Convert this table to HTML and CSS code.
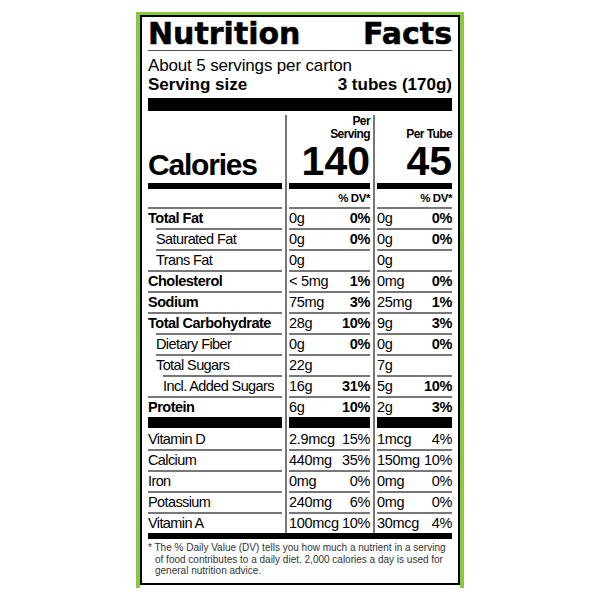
FILE: index.html
```html
<!DOCTYPE html>
<html lang="en">
<head>
<meta charset="utf-8">
<title>Nutrition Facts</title>
<link rel="stylesheet" href="styles.css">
</head>
<body>
<div class="label">
  <div class="panel">
    <h1 class="title"><span>Nutrition</span><span>Facts</span></h1>
    <p class="servings">About 5 servings per carton</p>
    <p class="size"><span>Serving size</span><span>3 tubes (170g)</span></p>
    <div class="bar-lg"></div>
    <div class="table">
      <div class="sep s1"></div>
      <div class="sep s2"></div>

      <div class="c1 head"><span class="cal">Calories</span></div>
      <div class="c2 head"><span class="per">Per<br>Serving</span><span class="big">140</span></div>
      <div class="c3 head"><span class="per">Per Tube</span><span class="big">45</span></div>

      <div class="c1 blk"></div><div class="c2 blk"></div><div class="c3 blk"></div>

      <div class="c1"></div><div class="c2 dv">% DV*</div><div class="c3 dv">% DV*</div>

      <div class="c1 r b">Total Fat</div><div class="c2 r v"><span>0g</span><b>0%</b></div><div class="c3 r v"><span>0g</span><b>0%</b></div>
      <div class="c1 r i1">Saturated Fat</div><div class="c2 r v"><span>0g</span><b>0%</b></div><div class="c3 r v"><span>0g</span><b>0%</b></div>
      <div class="c1 r i1">Trans Fat</div><div class="c2 r v"><span>0g</span></div><div class="c3 r v"><span>0g</span></div>
      <div class="c1 r b">Cholesterol</div><div class="c2 r v"><span>&lt; 5mg</span><b>1%</b></div><div class="c3 r v"><span>0mg</span><b>0%</b></div>
      <div class="c1 r b">Sodium</div><div class="c2 r v"><span>75mg</span><b>3%</b></div><div class="c3 r v"><span>25mg</span><b>1%</b></div>
      <div class="c1 r b">Total Carbohydrate</div><div class="c2 r v"><span>28g</span><b>10%</b></div><div class="c3 r v"><span>9g</span><b>3%</b></div>
      <div class="c1 r i1">Dietary Fiber</div><div class="c2 r v"><span>0g</span><b>0%</b></div><div class="c3 r v"><span>0g</span><b>0%</b></div>
      <div class="c1 r i1">Total Sugars</div><div class="c2 r v"><span>22g</span></div><div class="c3 r v"><span>7g</span></div>
      <div class="c1 r i2">Incl. Added Sugars</div><div class="c2 r v"><span>16g</span><b>31%</b></div><div class="c3 r v"><span>5g</span><b>10%</b></div>
      <div class="c1 r b">Protein</div><div class="c2 r v"><span>6g</span><b>10%</b></div><div class="c3 r v"><span>2g</span><b>3%</b></div>

      <div class="c1 blk"></div><div class="c2 blk"></div><div class="c3 blk"></div>

      <div class="c1 r first">Vitamin D</div><div class="c2 r v first"><span>2.9mcg</span><span>15%</span></div><div class="c3 r v first"><span>1mcg</span><span>4%</span></div>
      <div class="c1 r">Calcium</div><div class="c2 r v"><span>440mg</span><span>35%</span></div><div class="c3 r v"><span>150mg</span><span>10%</span></div>
      <div class="c1 r">Iron</div><div class="c2 r v"><span>0mg</span><span>0%</span></div><div class="c3 r v"><span>0mg</span><span>0%</span></div>
      <div class="c1 r">Potassium</div><div class="c2 r v"><span>240mg</span><span>6%</span></div><div class="c3 r v"><span>0mg</span><span>0%</span></div>
      <div class="c1 r">Vitamin A</div><div class="c2 r v"><span>100mcg</span><span>10%</span></div><div class="c3 r v"><span>30mcg</span><span>4%</span></div>
    </div>
    <div class="bar-end"></div>
    <p class="note">* The % Daily Value (DV) tells you how much a nutrient in a serving<br>of food contributes to a daily diet. 2,000 calories a day is used for<br>general nutrition advice.</p>
  </div>
</div>
</body>
</html>
```

FILE: styles.css
```css
* {
  box-sizing: border-box;
  margin: 0;
  padding: 0;
}

body {
  background: #fff;
  color: #000;
  font-family: "Liberation Sans", Arial, sans-serif;
}

.label {
  width: 328px;
  margin: 12px auto 0;
  border: solid #8dc63f;
  border-width: 3px 4px 0 4px;
  padding-bottom: 3px;
}

.panel {
  border: 2px solid #000;
  padding: 1px 6px 6px 6px;
  background: #fff;
}

.title {
  display: flex;
  justify-content: space-between;
  font-family: "DejaVu Sans", sans-serif;
  font-weight: bold;
  font-size: 30px;
  line-height: 32px;
  -webkit-text-stroke: 0.5px #000;
  border-bottom: 1px solid #555;
}

.servings {
  margin-top: 5px;
  font-size: 17px;
  line-height: 19px;
  letter-spacing: -0.15px;
}

.size {
  display: flex;
  justify-content: space-between;
  font-size: 17px;
  line-height: 19px;
  font-weight: bold;
}

.bar-lg {
  margin-top: 4px;
  height: 13px;
  background: #000;
}

.table {
  margin-top: 4px;
  display: grid;
  grid-template-columns: 134px 7px 81px 7px 75px;
  grid-template-rows: 68px 6px 18px repeat(10, 21px) 11px repeat(5, 21px);
}

.sep {
  grid-row: 1 / -1;
  background: linear-gradient(#777, #777) center / 2px 100% no-repeat;
}

.s1 { grid-column: 2; }
.s2 { grid-column: 4; }
.c1 { grid-column: 1; }
.c2 { grid-column: 3; }
.c3 { grid-column: 5; }

.head {
  display: flex;
  flex-direction: column;
  align-items: flex-end;
  justify-content: flex-end;
  padding-bottom: 2px;
}

.c1.head {
  align-items: flex-start;
  padding-bottom: 3px;
}

.cal {
  font-weight: bold;
  font-size: 30px;
  line-height: 30px;
  letter-spacing: -1.2px;
}

.per {
  font-weight: bold;
  font-size: 12px;
  line-height: 13px;
  text-align: right;
  letter-spacing: -0.6px;
}

.big {
  font-weight: bold;
  font-size: 41px;
  line-height: 40px;
}

.blk {
  background: #000;
}

.dv {
  font-weight: bold;
  font-size: 11.5px;
  line-height: 18px;
  text-align: right;
  letter-spacing: -0.4px;
}

.r {
  border-top: 2px solid #777;
  font-size: 14.5px;
  line-height: 19px;
  white-space: nowrap;
}

.r.first {
  border-top-color: transparent;
}

.c1.r {
  letter-spacing: -0.6px;
}

.c1.r.b {
  font-weight: bold;
  letter-spacing: -0.5px;
}

.i1 { margin-left: 8px; }
.i2 { margin-left: 15px; }

.v {
  display: flex;
  justify-content: space-between;
  letter-spacing: -0.3px;
}

.v b {
  font-weight: bold;
}

.bar-end {
  height: 6px;
  background: #000;
}

.note {
  margin-top: 3px;
  padding-left: 7px;
  text-indent: -7px;
  font-size: 10px;
  line-height: 11.5px;
  color: #333;
  white-space: nowrap;
}
```
